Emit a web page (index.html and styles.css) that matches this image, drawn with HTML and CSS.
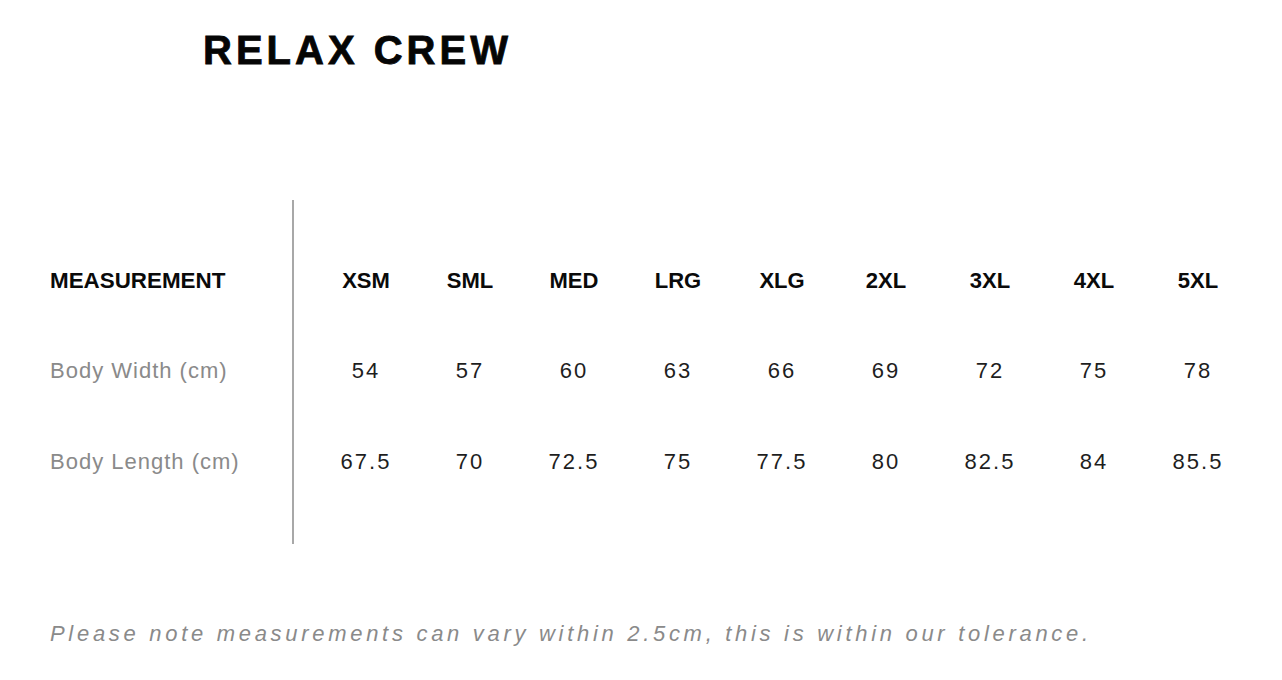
FILE: index.html
```html
<!DOCTYPE html>
<html lang="en">
<head>
<meta charset="utf-8">
<title>Relax Crew Size Chart</title>
<link rel="stylesheet" href="styles.css">
</head>
<body>
<div class="page">
  <h1 class="title">RELAX CREW</h1>
  <div class="chart">
    <div class="labels">
      <div class="cell head">MEASUREMENT</div>
      <div class="cell label">Body Width (cm)</div>
      <div class="cell label">Body Length (cm)</div>
    </div>
    <div class="sizes">
      <div class="cell size">XSM</div>
      <div class="cell size">SML</div>
      <div class="cell size">MED</div>
      <div class="cell size">LRG</div>
      <div class="cell size">XLG</div>
      <div class="cell size">2XL</div>
      <div class="cell size">3XL</div>
      <div class="cell size">4XL</div>
      <div class="cell size">5XL</div>
      <div class="cell num">54</div>
      <div class="cell num">57</div>
      <div class="cell num">60</div>
      <div class="cell num">63</div>
      <div class="cell num">66</div>
      <div class="cell num">69</div>
      <div class="cell num">72</div>
      <div class="cell num">75</div>
      <div class="cell num">78</div>
      <div class="cell num">67.5</div>
      <div class="cell num">70</div>
      <div class="cell num">72.5</div>
      <div class="cell num">75</div>
      <div class="cell num">77.5</div>
      <div class="cell num">80</div>
      <div class="cell num">82.5</div>
      <div class="cell num">84</div>
      <div class="cell num">85.5</div>
    </div>
  </div>
  <p class="note">Please note measurements can vary within 2.5cm, this is within our tolerance.</p>
</div>
</body>
</html>
```

FILE: styles.css
```css
html, body {
  margin: 0;
  padding: 0;
  background: #ffffff;
}

body {
  font-family: "Liberation Sans", Arial, sans-serif;
  width: 1282px;
  height: 680px;
  overflow: hidden;
}

.page {
  display: flex;
  flex-direction: column;
}

.title {
  margin: 26px 0 0 203px;
  font-size: 40px;
  line-height: 48px;
  font-weight: 700;
  letter-spacing: 4px;
  color: #050505;
  -webkit-text-stroke: 0.8px #050505;
}

.chart {
  display: flex;
  margin-top: 126px;
  padding-left: 50px;
}

.labels {
  width: 242px;
  border-right: 2px solid #a8a8a8;
  padding: 37px 0 37px;
  display: grid;
  grid-template-rows: 88px 91px 91px;
}

.sizes {
  display: grid;
  grid-template-columns: repeat(9, 104px);
  grid-template-rows: 88px 91px 91px;
  padding: 37px 0 37px 20px;
}

.cell {
  display: flex;
  align-items: center;
}

.sizes .cell {
  justify-content: center;
}

.head {
  font-size: 22.4px;
  font-weight: 700;
  color: #0a0a0a;
}

.label {
  font-size: 22px;
  letter-spacing: 1px;
  color: #8a8a8a;
}

.size {
  font-size: 22px;
  font-weight: 700;
  color: #0a0a0a;
}

.num {
  font-size: 22px;
  letter-spacing: 2px;
  color: #1e1e1e;
}

.note {
  margin: 77px 0 0 50px;
  font-size: 22px;
  line-height: 26px;
  font-style: italic;
  letter-spacing: 3.7px;
  color: #8a8a8a;
}
```
